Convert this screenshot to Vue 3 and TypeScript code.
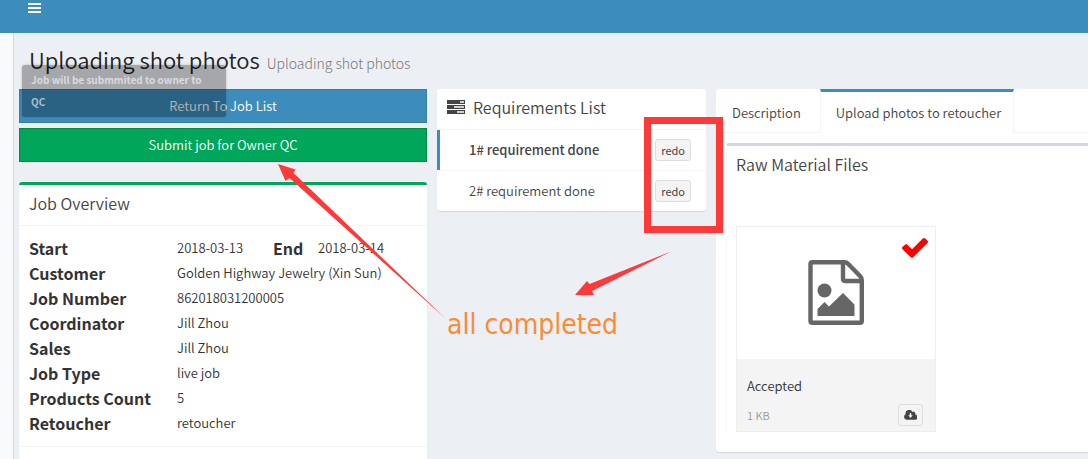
<script setup lang="ts">
import { ref } from 'vue'

interface Field { label: string; value: string }
interface Requirement { id: number; text: string; active: boolean }

const fields: Field[] = [
  { label: 'Customer', value: 'Golden Highway Jewelry (Xin Sun)' },
  { label: 'Job Number', value: '862018031200005' },
  { label: 'Coordinator', value: 'Jill Zhou' },
  { label: 'Sales', value: 'Jill Zhou' },
  { label: 'Job Type', value: 'live job' },
  { label: 'Products Count', value: '5' },
  { label: 'Retoucher', value: 'retoucher' },
]
const requirements: Requirement[] = [
  { id: 1, text: '1# requirement done', active: true },
  { id: 2, text: '2# requirement done', active: false },
]
const tabs: string[] = ['Description', 'Upload photos to retoucher']
const activeTab = ref(1)
</script>

<template>
  <div class="page">
    <header class="navbar">
      <button class="menu" type="button" aria-label="Toggle navigation">
        <svg width="13" height="10" viewBox="0 0 13 10"><path d="M0 0h13v2H0zM0 4h13v2H0zM0 8h13v2H0z" fill="#fff" /></svg>
      </button>
    </header>
    <div class="shell">
      <aside class="sidebar"></aside>
      <main class="content">
        <h1 class="title">Uploading shot photos <small>Uploading shot photos</small></h1>
        <div class="columns">
          <section class="col">
            <button class="btn primary" type="button">Return To Job List</button>
            <button class="btn success" type="button">Submit job for Owner QC</button>
            <div class="box overview">
              <h3 class="box-title">Job Overview</h3>
              <dl class="fields">
                <div class="field">
                  <dt>Start</dt><dd class="start">2018-03-13</dd>
                  <dt class="end">End</dt><dd>2018-03-14</dd>
                </div>
                <div v-for="f in fields" :key="f.label" class="field">
                  <dt>{{ f.label }}</dt><dd>{{ f.value }}</dd>
                </div>
              </dl>
              <div class="box-footer"></div>
            </div>
          </section>

          <section class="col">
            <div class="box requirements">
              <h3 class="box-title">
                <svg class="tasks" width="18" height="14" viewBox="0 0 18 14">
                  <path fill="#444" fill-rule="evenodd" d="M0 0h18v4H0zM13 1.300v1.400h4V1.300zM0 5h18v4H0zM7 6.300v1.400h10V6.300zM0 10h18v4H0zM10 11.300v1.400h7v-1.400z" />
                </svg>
                Requirements List
              </h3>
              <ul class="list">
                <li v-for="r in requirements" :key="r.id" :class="{ active: r.active }">
                  <span>{{ r.text }}</span>
                  <button class="small-btn" type="button">redo</button>
                </li>
              </ul>
            </div>
          </section>

          <section class="col">
            <div class="tabs-box">
              <nav class="tabs">
                <button v-for="(t, i) in tabs" :key="t" type="button" :class="{ active: i === activeTab }" @click="activeTab = i">{{ t }}</button>
              </nav>
              <div class="tab-body">
                <div class="files">
                  <h3>Raw Material Files</h3>
                  <article class="file">
                    <div class="preview">
                      <svg class="image-icon" width="56" height="66" viewBox="0 0 56 66">
                        <path d="M4.500 2.200H36.500Q38.500 2.200 40 3.700L52 16Q53.800 17.800 53.800 20V61Q53.800 62.800 52 62.800H4.500Q2.500 62.800 2.500 61V4.200Q2.500 2.200 4.500 2.200ZM35 3V18.500Q35 21 37.500 21H53" fill="none" stroke="#666" stroke-width="4.400" />
                        <circle cx="16.500" cy="30.500" r="7" fill="#666" />
                        <path d="M9.500 56V49L16.500 42L21 46.500L35 33L46.500 44.500V56Z" fill="#666" />
                      </svg>
                      <svg class="check" width="26" height="20" viewBox="0 0 26 20">
                        <path d="M3.800 6.200Q4.300 5.800 4.800 6.200L10 11.300L20.800.5Q22.200-.5 23.300.6L25.500 2.800Q26.500 4 25.500 5L11.500 19Q10 20.500 8.500 19L.6 11.200Q-.5 10 .6 8.800Z" fill="#f00" />
                      </svg>
                    </div>
                    <div class="caption">
                      <span class="name">Accepted</span>
                      <div class="meta">
                        <span>1 KB</span>
                        <button class="small-btn download" type="button" aria-label="Download">
                          <svg width="13" height="10" viewBox="0 0 13 10">
                            <path fill="#444" fill-rule="evenodd" d="M2.900 9.800A2.900 2.900 0 0 1 1.700 4.300A3.500 3.500 0 0 1 8.300 2A1.900 1.900 0 0 1 11 4.600A2.600 2.600 0 0 1 10.400 9.800ZM5.800 3V5.300H4.200L6.500 8L8.800 5.300H7.200V3Z" />
                          </svg>
                        </button>
                      </div>
                    </div>
                  </article>
                </div>
              </div>
            </div>
          </section>
        </div>
      </main>
    </div>

    <div class="toast" role="status">Job will be submmited to owner to QC</div>
    <div class="frame"></div>
    <svg class="arrows" width="430" height="180" viewBox="270 150 430 180">
      <path fill="#fd3a39" d="M278 164L295.500 169.500L293.500 173L446 319L289.500 178L285.500 181Z" />
      <path fill="#fd3a39" d="M575 295L587 281L589.500 284L671 251.500L592 291L594 295Z" />
    </svg>
    <div class="note">all completed</div>
  </div>
</template>

<style>
body { margin: 0; overflow: hidden; }
</style>

<style scoped>
* { box-sizing: border-box; }
.page {
  position: relative;
  height: 100vh;
  overflow: hidden;
  display: flex;
  flex-direction: column;
  background: #ecf0f5;
  color: #333;
  font-family: "Source Sans Pro", "Noto Sans CJK SC", sans-serif;
  font-size: 13px;
  font-weight: 350;
  line-height: 20px;
}
button { font: inherit; color: inherit; margin: 0; cursor: pointer; }
h1, h3, dl, dd, ul { margin: 0; padding: 0; font-weight: 350; }
.navbar { flex: none; height: 33px; padding: 3px 28px; background: #3c8dbc; }
.menu { display: block; padding: 0; border: 0; background: none; line-height: 0; }
.menu svg { display: block; }
.shell { flex: 1; display: flex; min-height: 0; }
.sidebar { flex: none; width: 14px; background: #f9fafc; border-right: 1px solid #d2d6de; }
.content { flex: 1; min-width: 0; padding: 13px 0 0 5px; background: #ecf0f5; }
.title { padding-left: 10px; font-size: 22px; line-height: 26px; color: #222; white-space: nowrap; }
.title small { margin-left: 2px; font-size: 14px; font-weight: 300; color: #777; }
.columns { display: grid; grid-template-columns: 408fr 269fr 372fr; gap: 10px; margin-top: 13px; align-items: start; }
.col { min-width: 0; }
.btn { display: block; width: 100%; height: 34px; padding: 0; margin-bottom: 5px; border: 1px solid; color: #fff; }
.primary { background: #3c8dbc; border-color: #367fa9; }
.success { background: #00a65a; border-color: #008d4c; }
.box { background: #fff; border-radius: 3px; box-shadow: 0 1px 1px rgba(0, 0, 0, .1); }
.overview { margin-top: 20px; border-top: 3px solid #00a65a; }
.box-title { display: flex; align-items: center; height: 41px; padding: 0 10px 4px; border-bottom: 1px solid #f4f4f4; font-size: 16px; color: #444; }
.fields { padding: 10px; }
.field { display: flex; height: 25px; line-height: 24px; white-space: nowrap; }
dt { flex: none; width: 148px; font-size: 16px; font-weight: 700; }
dt.end { width: 45px; }
.start { width: 96px; }
.box-footer { height: 40px; border-top: 1px solid #f4f4f4; }
.tasks { margin-right: 8px; }
.list { list-style: none; }
.list li { display: flex; align-items: center; justify-content: space-between; height: 40px; padding: 0 15px 0 29px; border-left: 3px solid transparent; color: #444; }
.list li + li { height: 41px; border-top: 1px solid #f4f4f4; }
.list li.active { border-left-color: #3c8dbc; font-weight: 500; }
.small-btn { height: 22px; padding: 0 5px; border: 1px solid #ddd; border-radius: 3px; background: #f4f4f4; color: #444; font-size: 11px; font-weight: 400; line-height: 18px; }
.tabs-box { background: #fff; border-radius: 3px 0 0 3px; box-shadow: 0 1px 1px rgba(0, 0, 0, .1); }
.tabs { display: flex; height: 44px; border-bottom: 1px solid #f4f4f4; }
.tabs button { height: 44px; padding: 1px 12px 0 15px; border: 1px solid transparent; border-width: 3px 1px 0; background: none; color: #444; white-space: nowrap; }
.tabs button:first-child { padding-right: 18px; }
.tabs .active { border-color: #3c8dbc #f4f4f4 transparent; background: #fff; }
.tab-body { padding: 10px 0 20px 10px; }
.files { border-top: 3px solid #d2d6de; border-left: 1px solid #f7f7f7; border-radius: 3px 0 0 0; padding-left: 9px; }
.files h3 { padding-top: 8px; font-size: 16px; line-height: 20px; color: #444; }
.file { width: 200px; margin-top: 52px; border: 1px solid #eee; }
.preview { position: relative; display: flex; align-items: center; justify-content: center; height: 132px; }
.check { position: absolute; top: 11px; right: 7px; }
.caption { height: 72px; padding: 17px 12px 5px 10px; background: #f4f4f4; }
.name { display: block; line-height: 20px; }
.meta { display: flex; align-items: center; justify-content: space-between; margin-top: 8px; font-size: 11px; color: #999; }
.download { display: flex; align-items: center; }
.toast { position: absolute; left: 22px; top: 65px; width: 204px; height: 52px; padding: 4px 9px; border-radius: 3px; background: rgba(0, 0, 0, .3); box-shadow: 0 0 3px rgba(0, 0, 0, .2); color: rgba(255, 255, 255, .6); font-size: 10px; font-weight: 700; line-height: 22px; }
.frame { position: absolute; left: 644px; top: 117px; width: 79px; height: 116px; border: 7px solid #fd3a39; }
.arrows { position: absolute; left: 270px; top: 150px; pointer-events: none; }
.note { position: absolute; left: 447px; top: 308px; color: #fa8c35; font: 28px/34px "DejaVu Sans Condensed", "DejaVu Sans", sans-serif; white-space: nowrap; }
</style>
